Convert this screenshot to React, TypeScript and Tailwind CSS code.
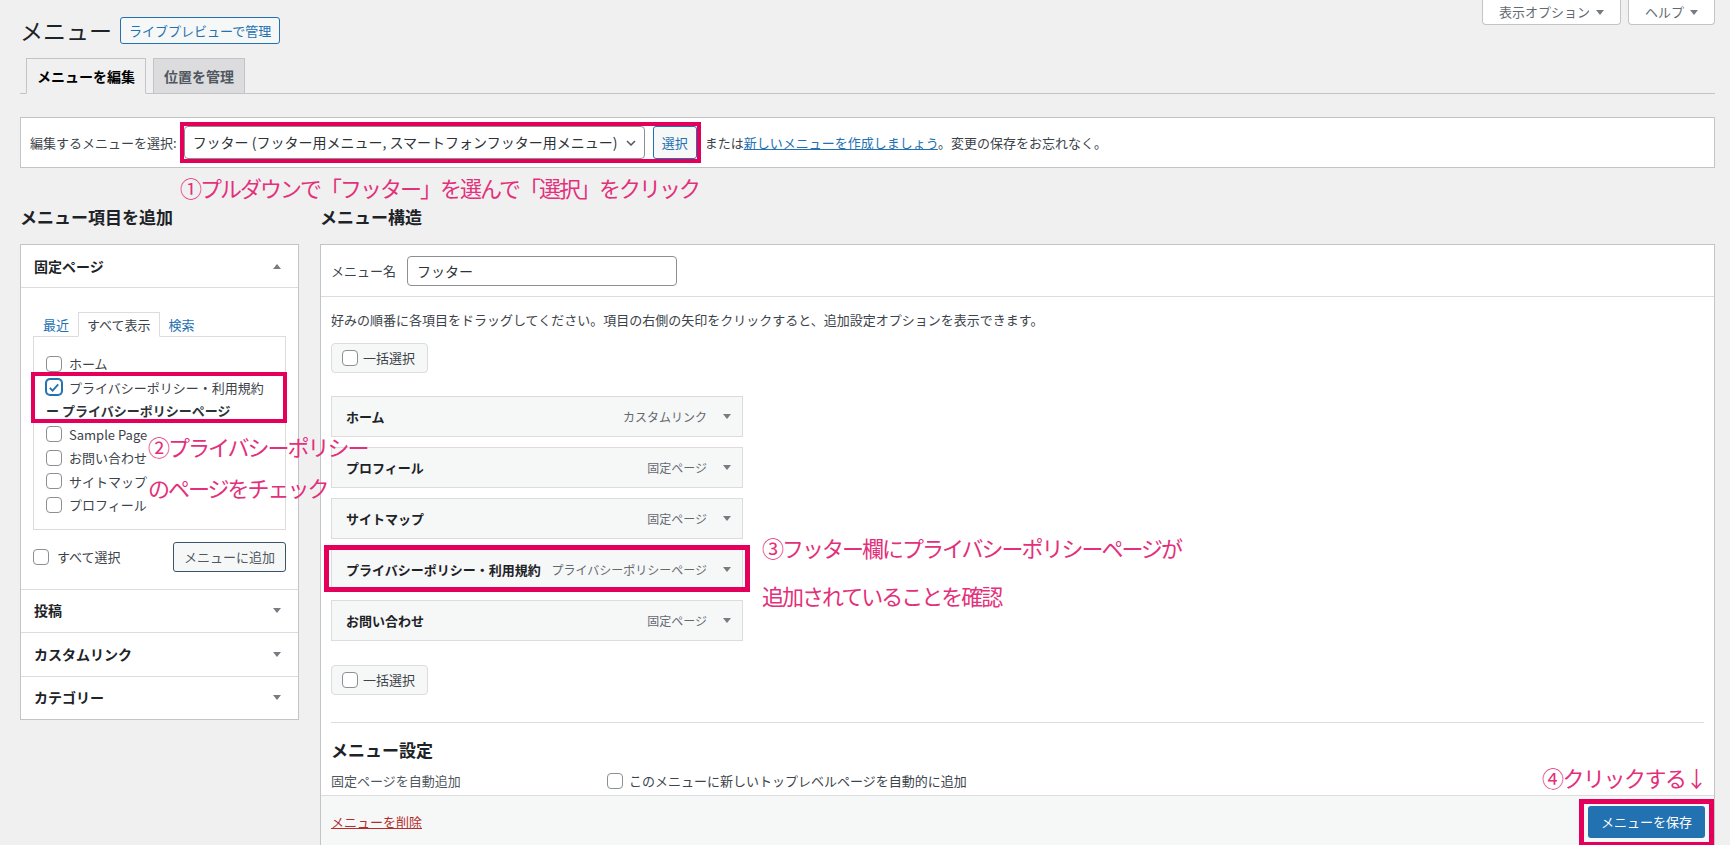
import React from 'react';

function Checkbox({ checked = false }: { checked?: boolean }) {
  return (
    <span
      className={
        checked
          ? 'flex h-4 w-4 shrink-0 items-center justify-center rounded-[4px] border border-[#2271b1] bg-white shadow-[0_0_0_1px_#2271b1]'
          : 'flex h-4 w-4 shrink-0 items-center justify-center rounded-[4px] border border-[#8c8f94] bg-white'
      }
    >
      {checked && (
        <svg viewBox="0 0 20 20" className="h-[15px] w-[15px]">
          <path d="M4 10.5l4 4 8-9" fill="none" stroke="#2271b1" strokeWidth="2.6" />
        </svg>
      )}
    </span>
  );
}

function Caret({ up = false }: { up?: boolean }) {
  return (
    <svg width="8" height="5" viewBox="0 0 8 5" className="shrink-0">
      <path d={up ? 'M0 5h8L4 0z' : 'M0 0h8L4 5z'} fill="#787c82" />
    </svg>
  );
}

function Frame({ className }: { className: string }) {
  return <span className={'pointer-events-none absolute border-[#e4005a] ' + className} />;
}

const pages = ['ホーム', 'Sample Page', 'お問い合わせ', 'サイトマップ', 'プロフィール'];

const menuItems = [
  { title: 'ホーム', type: 'カスタムリンク' },
  { title: 'プロフィール', type: '固定ページ' },
  { title: 'サイトマップ', type: '固定ページ' },
  { title: 'プライバシーポリシー・利用規約', type: 'プライバシーポリシーページ', framed: true },
  { title: 'お問い合わせ', type: '固定ページ' },
];

export default function App() {
  return (
    <div className="relative h-screen overflow-hidden bg-[#f0f0f1] pl-5 pr-[15px] font-['Noto_Sans_CJK_JP','Noto_Sans',sans-serif] text-[13px] text-[#3c434a]">
      {/* title row */}
      <div className="flex items-start justify-between">
        <div className="flex items-center gap-[8px] pt-[17px]">
          <h1 className="text-[23px] leading-[27px] font-normal text-[#1d2327]">メニュー</h1>
          <a className="flex h-[27px] items-center rounded-[3px] border border-[#2271b1] bg-[#f6f7f7] px-[8px] text-[13px] text-[#2271b1]">
            ライブプレビューで管理
          </a>
        </div>
        <div className="flex gap-[7px]">
          <button className="flex h-[25px] items-center gap-[6px] rounded-b-[4px] border border-t-0 border-[#c3c4c7] bg-white px-[16px] text-[13px] text-[#646970]">
            表示オプション <Caret />
          </button>
          <button className="flex h-[25px] items-center gap-[6px] rounded-b-[4px] border border-t-0 border-[#c3c4c7] bg-white px-[16px] text-[13px] text-[#646970]">
            ヘルプ <Caret />
          </button>
        </div>
      </div>

      {/* tabs */}
      <div className="mt-[14px] flex gap-[7px] border-b border-[#c3c4c7] pl-[6px]">
        <div className="-mb-px border border-[#c3c4c7] border-b-[#f0f0f1] bg-[#f0f0f1] px-[10px] py-[5px] text-[14px] leading-[24px] font-semibold text-black">
          メニューを編集
        </div>
        <div className="-mb-px border border-[#c3c4c7] bg-[#dcdcde] px-[10px] py-[5px] text-[14px] leading-[24px] font-semibold text-[#50575e]">
          位置を管理
        </div>
      </div>

      {/* select menu */}
      <div className="mt-[23px] flex items-center border border-[#c3c4c7] bg-white px-[9px] py-[8px]">
        <label className="whitespace-nowrap">編集するメニューを選択:</label>
        <div className="relative ml-[7px] flex items-center gap-[8px]">
          <div className="relative">
            <select className="h-[33px] w-[461px] appearance-none rounded-[4px] border border-[#8c8f94] bg-white pl-[8px] text-[14px] text-[#2c3338]">
              <option>フッター (フッター用メニュー, スマートフォンフッター用メニュー)</option>
            </select>
            <svg width="10" height="6" viewBox="0 0 10 6" className="pointer-events-none absolute right-[9px] top-[14px]">
              <path d="M1 1l4 4 4-4" fill="none" stroke="#50575e" strokeWidth="1.5" />
            </svg>
          </div>
          <button className="h-[33px] rounded-[3px] border border-[#2271b1] bg-[#f6f7f7] px-[8px] text-[13px] text-[#2271b1]">選択</button>
          <Frame className="-inset-[4px] border-4" />
        </div>
        <span className="ml-[8px] whitespace-nowrap">
          または<a className="text-[#2271b1] underline">新しいメニューを作成しましょう</a>。変更の保存をお忘れなく。
        </span>
      </div>

      {/* columns */}
      <div className="mt-[38px] flex gap-[21px]">
        <div className="w-[279px] shrink-0">
          <h2 className="text-[17px] leading-[22px] font-bold text-[#1d2327]">メニュー項目を追加</h2>
          <div className="mt-[16px] border border-[#c3c4c7] bg-white">
            <div className="flex h-[43px] items-center justify-between border-b border-[#dcdcde] pl-[13px] pr-[17px]">
              <span className="text-[14px] font-bold text-[#1d2327]">固定ページ</span>
              <Caret up />
            </div>
            <div className="px-[12px] pt-[24px] pb-[17px]">
              <div className="flex pl-px">
                <span className="-mb-px border border-transparent px-[8px] py-[2px] leading-[19px] text-[#2271b1]">最近</span>
                <span className="-mb-px border border-[#dcdcde] border-b-white bg-white px-[8px] py-[2px] leading-[19px] text-[#3c434a]">すべて表示</span>
                <span className="-mb-px border border-transparent px-[8px] py-[2px] leading-[19px] text-[#2271b1]">検索</span>
              </div>
              <div className="border border-[#dcdcde] bg-white pt-[15px] pb-[12px] pl-[12px]">
                <div className="flex h-[23.5px] items-center gap-[7px]">
                  <Checkbox />
                  <span>{pages[0]}</span>
                </div>
                <div className="relative">
                  <div className="flex h-[23.5px] items-center gap-[7px]">
                    <Checkbox checked />
                    <span>プライバシーポリシー・利用規約</span>
                  </div>
                  <div className="flex h-[23.5px] items-center font-semibold text-[#2c3338]">
                    <span className="w-[16px]">ー</span>
                    <span>プライバシーポリシーページ</span>
                  </div>
                  <Frame className="-left-[15px] -right-[2px] -top-[4px] bottom-0 border-4" />
                </div>
                {pages.slice(1).map((p) => (
                  <div key={p} className="flex h-[23.5px] items-center gap-[7px]">
                    <Checkbox />
                    <span>{p}</span>
                  </div>
                ))}
              </div>
              <div className="mt-[12px] flex items-center justify-between">
                <div className="flex items-center gap-[8px]">
                  <Checkbox />
                  <span>すべて選択</span>
                </div>
                <button className="h-[30px] rounded-[3px] border border-[#3b5469] bg-[#f6f7f7] px-[10px] text-[13px] text-[#50575e]">
                  メニューに追加
                </button>
              </div>
            </div>
            {['投稿', 'カスタムリンク', 'カテゴリー'].map((t) => (
              <div key={t} className="flex h-[43.5px] items-center justify-between border-t border-[#dcdcde] pl-[13px] pr-[17px]">
                <span className="text-[14px] font-bold text-[#1d2327]">{t}</span>
                <Caret />
              </div>
            ))}
          </div>
        </div>

        <div className="min-w-0 flex-1">
          <h2 className="text-[17px] leading-[22px] font-bold text-[#1d2327]">メニュー構造</h2>
          <div className="mt-[16px] border border-[#c3c4c7] bg-white">
            <div className="flex h-[52px] items-center border-b border-[#dcdcde] px-[10px]">
              <span>メニュー名</span>
              <input
                readOnly
                value="フッター"
                className="ml-[11px] h-[30px] w-[270px] rounded-[4px] border border-[#8c8f94] px-[9px] text-[14px] text-[#2c3338]"
              />
            </div>
            <div className="px-[10px] pt-[13px] pb-[4px]">
              <p className="leading-[20px]">
                好みの順番に各項目をドラッグしてください。項目の右側の矢印をクリックすると、追加設定オプションを表示できます。
              </p>
              <div className="mt-[13px] inline-flex h-[30px] items-center gap-[5px] rounded-[4px] border border-[#dcdcde] bg-[#f6f7f7] pl-[10px] pr-[12px]">
                <Checkbox />
                <span>一括選択</span>
              </div>
              <div className="mt-[23px] flex flex-col gap-[10px]">
                {menuItems.map((m) => (
                  <div
                    key={m.title}
                    className="relative flex h-[41px] w-[412px] items-center justify-between border border-[#dcdcde] bg-[#f6f7f7] pl-[14px]"
                  >
                    <span className="font-bold text-[#1d2327]">{m.title}</span>
                    <div className="flex items-center gap-[5px]">
                      <span className="text-[12px] text-[#646970]">{m.type}</span>
                      <span className="flex w-[30px] justify-center">
                        <Caret />
                      </span>
                    </div>
                    {m.framed && <Frame className="-left-[8px] -right-[8px] -top-[5px] -bottom-[3px] border-[5px]" />}
                  </div>
                ))}
              </div>
              <div className="mt-[24px] flex h-[30px] w-[97px] items-center gap-[5px] rounded-[4px] border border-[#dcdcde] bg-[#f6f7f7] pl-[10px]">
                <Checkbox />
                <span>一括選択</span>
              </div>
              <div className="mt-[27px] border-t border-[#dcdcde]" />
              <h3 className="mt-[16px] text-[17px] leading-[22px] font-bold text-[#1d2327]">メニュー設定</h3>
              <div className="mt-[10px] flex h-[20px] items-center">
                <span className="w-[276px] text-[#50575e]">固定ページを自動追加</span>
                <Checkbox />
                <span className="ml-[6px]">このメニューに新しいトップレベルページを自動的に追加</span>
              </div>
            </div>
            <div className="flex items-center justify-between border-t border-[#dcdcde] bg-[#f6f7f7] py-[10px] pl-[10px] pr-[9px]">
              <a className="text-[#b32d2e] underline">メニューを削除</a>
              <div className="relative">
                <button className="h-[32px] rounded-[3px] bg-[#2271b1] px-[13px] text-[13px] text-white">メニューを保存</button>
                <Frame className="-left-[9px] -right-[9px] -top-[7px] -bottom-[9px] border-[5px]" />
              </div>
            </div>
          </div>
        </div>
      </div>

      {/* annotations */}
      <div className="pointer-events-none absolute left-[180px] top-[176px] text-[22px] leading-[22px] tracking-[-2px] whitespace-nowrap text-[#e3307a]">
        ①プルダウンで「フッター」を選んで「選択」をクリック
      </div>
      <div className="pointer-events-none absolute left-[148px] top-[426px] text-[22px] leading-[41px] tracking-[-2px] whitespace-nowrap text-[#e3307a]">
        <div>②プライバシーポリシー</div>
        <div>のページをチェック</div>
      </div>
      <div className="pointer-events-none absolute left-[762px] top-[523px] text-[22px] leading-[48px] tracking-[-2px] whitespace-nowrap text-[#e3307a]">
        <div>③フッター欄にプライバシーポリシーページが</div>
        <div>追加されていることを確認</div>
      </div>
      <div className="pointer-events-none absolute left-[1542px] top-[766px] text-[22px] leading-[22px] tracking-[-1.5px] whitespace-nowrap text-[#e3307a]">
        ④クリックする↓
      </div>
    </div>
  );
}
